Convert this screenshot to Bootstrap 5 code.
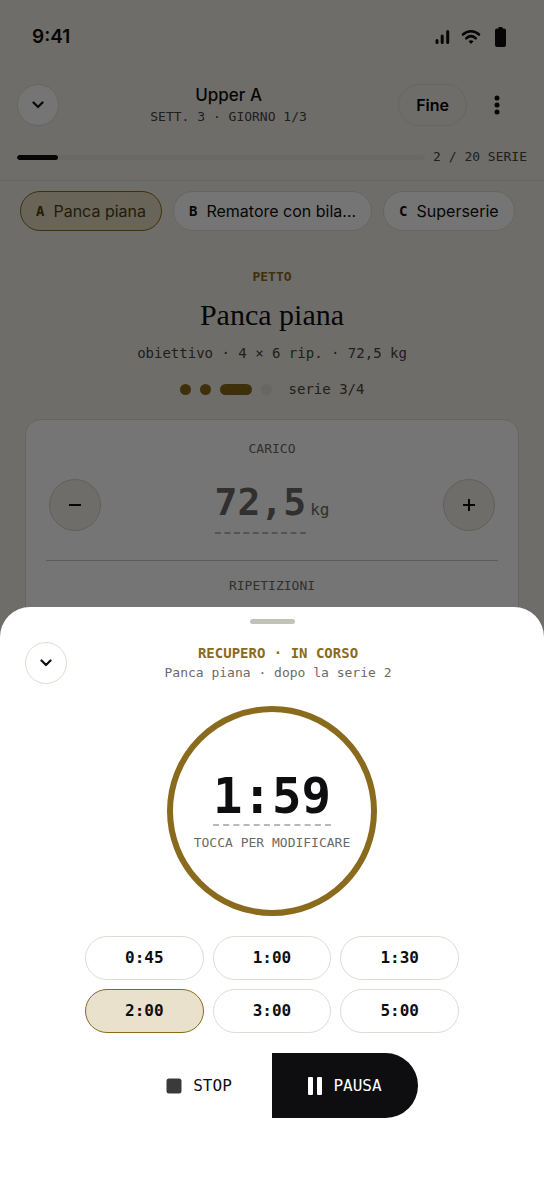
<!DOCTYPE html>
<html lang="it">
<head>
<meta charset="utf-8">
<meta name="viewport" content="width=device-width, initial-scale=1">
<title>Upper A – Recupero</title>
<link href="https://cdn.jsdelivr.net/npm/bootstrap@5.3.0/dist/css/bootstrap.min.css" rel="stylesheet">
<style>
  :root {
    --ink: #0e0e10;
    --soft-ink: #444441;
    --muted-ink: #6b6a66;
    --gold: #8a6a1c;
    --gold-soft: #e9e1cb;
    --paper: #f2eee8;
    --line: #dfdcd6;
    --mono: "DejaVu Sans Mono", "Liberation Mono", monospace;
  }
  body { font-family: Inter, Roboto, sans-serif; color: var(--ink); background: var(--paper); }
  .mono { font-family: var(--mono); }
  .t13 { font-size: 13px; line-height: 20px; }
  .t14 { font-size: 14px; line-height: 20px; }
  .t16 { font-size: 16px; line-height: 20px; }
  .ink-soft { color: var(--soft-ink); }
  .ink-muted { color: var(--muted-ink); }
  .gold { color: var(--gold); }

  .statusbar { height: 74px; padding: 0 38px 0 32px; }
  .clock { font-size: 19px; font-weight: 600; }
  .topbar { padding: 9px 17px 13px; border-bottom: 1px solid var(--line); }
  .round-btn { width: 42px; height: 42px; border: 1px solid var(--line); border-radius: 50%; background: #fff; color: var(--ink); padding: 0; flex: none; display: grid; place-items: center; }
  .end-btn { height: 42px; padding: 0 17px; border: 1px solid var(--line); border-radius: 21px; background: transparent; font-size: 16px; font-weight: 600; }
  .menu-btn { width: 42px; height: 42px; margin: 0 9px; border: 0; background: transparent; padding: 0; display: grid; place-items: center; }
  .session { font-size: 17px; font-weight: 500; line-height: 24px; }
  .track { height: 5px; background: #e8e4dc; border-radius: 3px; }
  .track .progress-bar { background: var(--ink); border-radius: 3px; }

  .chips { padding: 10px 20px 0; gap: 11px; }
  .chip { height: 40px; padding: 0 15px; border: 1px solid var(--line); border-radius: 20px; background: #fff; color: var(--ink); font-size: 16px; display: flex; align-items: center; gap: 9px; white-space: nowrap; }
  .chip b { font-family: var(--mono); font-size: 14px; }
  .chip.on { background: #e2dbbf; border-color: var(--gold); color: #4f3d12; }

  .muscle { margin-top: 36px; }
  .exercise { font-family: "Liberation Serif", serif; font-size: 30px; line-height: 44px; font-weight: 400; margin: 6px 0; }
  .sets { gap: 9px; }
  .dot { width: 11px; height: 11px; border-radius: 6px; background: var(--gold); }
  .dot.now { width: 32px; }
  .dot.todo { background: #e4e0d9; }

  .entry { margin: 20px 25px 0; padding: 19px 20px; background: #fff; border: 1px solid var(--line); border-radius: 16px; height: 420px; }
  .load-row { margin-top: 17px; padding: 0 3px; }
  .step { width: 52px; height: 52px; border: 1px solid #d4d0c9; border-radius: 50%; background: var(--paper); display: grid; place-items: center; padding: 0; }
  .load { font-size: 38px; line-height: 52px; font-weight: 700; color: #6b6a66; padding-bottom: 4px; }
  .dashed { border: 0; border-bottom: 2px dashed #b9b8b4; background: transparent; }
  .rule { border-top: 1px solid #c9c6c0; margin: 26px 0 15px; }

  .scrim { background: rgba(0, 0, 0, .54); }
  .sheet { background: #fff; border-radius: 30px 30px 0 0; padding: 12px 25px 64px; }
  .grip { width: 45px; height: 5px; border-radius: 3px; background: #c2c2b9; margin: 0 auto 18px; }
  .sheet-head { display: grid; grid-template-columns: 42px 1fr 30px; }
  .sheet-title { padding-top: 1px; }
  .dial { width: 210px; height: 210px; border: 6px solid var(--gold); border-radius: 50%; background: transparent; padding: 0; margin: 22px auto 20px; display: flex; flex-direction: column; align-items: center; justify-content: center; color: var(--ink); }
  .time { font-size: 49px; line-height: 54px; font-weight: 700; border-bottom: 2px dashed #b9b8b4; margin-bottom: 7px; }
  .presets { display: grid; grid-template-columns: repeat(3, 1fr); gap: 9px; max-width: 374px; margin: 0 auto 20px; }
  .preset { height: 44px; border: 1px solid var(--line); border-radius: 22px; background: #fff; color: var(--ink); font-weight: 700; padding: 0; }
  .preset.on { background: var(--gold-soft); border-color: var(--gold); }
  .actions { display: grid; grid-template-columns: 1fr 1fr; max-width: 292px; margin: 0 auto; }
  .act { height: 65px; border: 0; background: #fff; color: var(--ink); display: flex; align-items: center; justify-content: center; gap: 11px; padding: 0; }
  .act.main { background: var(--ink); color: #fff; border-radius: 0 33px 33px 0; }
</style>
</head>
<body>
<div class="vh-100 overflow-hidden">
  <div class="statusbar d-flex align-items-center justify-content-between">
    <span class="clock">9:41</span>
    <div class="d-flex align-items-center">
      <svg width="15" height="16" viewBox="0 0 15 16" stroke="#0e0e10" stroke-width="3" stroke-linecap="round"><path d="M2 11.500v2M7.200 7v6.500M12.700 2.500v11"/></svg>
      <svg class="ms-2 me-2" width="25" height="18" viewBox="-1 0 25 18" fill="none" stroke="#0e0e10" stroke-width="2.600" stroke-linecap="round"><path d="M4 6.500C8.500 2.200 15.500 2.200 20 6.500M7.300 10.300c2.900-2.600 6.500-2.600 9.400 0"/><path d="M9.500 13.300q2.500-2 5 0L12 16z" fill="#0e0e10" stroke="none"/></svg>
      <svg class="ms-1" width="11" height="20" viewBox="0 0 11 20" fill="#0e0e10"><path d="M3.500 0h4v1.500H9a2 2 0 0 1 2 2V18a2 2 0 0 1-2 2H2a2 2 0 0 1-2-2V3.500a2 2 0 0 1 2-2h1.500z"/></svg>
    </div>
  </div>

  <header class="topbar">
    <div class="d-flex align-items-center">
      <button class="round-btn" type="button" aria-label="Riduci"><svg width="12" height="8" viewBox="0 0 12 8" fill="none" stroke="currentColor" stroke-width="2.200" stroke-linecap="round" stroke-linejoin="round"><path d="M1.500 1.500 6 6l4.500-4.500"/></svg></button>
      <div class="flex-fill text-center">
        <div class="session">Upper A</div>
        <div class="mono t13 ink-soft">SETT. 3 · GIORNO 1/3</div>
      </div>
      <button class="end-btn" type="button">Fine</button>
      <button class="menu-btn" type="button" aria-label="Altro"><svg width="6" height="20" viewBox="0 0 6 20" fill="#0e0e10"><circle cx="3" cy="3" r="2.500"/><circle cx="3" cy="10" r="2.500"/><circle cx="3" cy="17" r="2.500"/></svg></button>
    </div>
    <div class="d-flex align-items-center mt-3 pt-1">
      <div class="progress track flex-fill me-2" role="progressbar" aria-label="Serie completate" aria-valuenow="10" aria-valuemin="0" aria-valuemax="100"><div class="progress-bar" style="width:10%"></div></div>
      <span class="mono t13 ink-soft">2 / 20 SERIE</span>
    </div>
  </header>

  <nav class="chips d-flex" aria-label="Esercizi">
    <button class="chip on" type="button"><b>A</b>Panca piana</button>
    <button class="chip" type="button"><b>B</b>Rematore con bila…</button>
    <button class="chip" type="button"><b>C</b>Superserie</button>
  </nav>

  <main>
    <section class="text-center">
      <div class="mono t13 gold fw-bold muscle">PETTO</div>
      <h1 class="exercise">Panca piana</h1>
      <div class="mono t14 ink-soft">obiettivo · 4 × 6 rip. · 72,5 kg</div>
      <div class="sets d-flex align-items-center justify-content-center mt-3">
        <span class="dot"></span><span class="dot"></span><span class="dot now"></span><span class="dot todo"></span>
        <span class="mono t14 ink-soft ms-2">serie 3/4</span>
      </div>
    </section>
    <section class="entry">
      <div class="mono t13 ink-muted text-center">CARICO</div>
      <div class="load-row d-flex align-items-center justify-content-between">
        <button class="step" type="button" aria-label="Meno"><svg width="14" height="14" viewBox="0 0 14 14" stroke="#0e0e10" stroke-width="2"><path d="M1 7h12"/></svg></button>
        <div class="d-flex align-items-baseline mono">
          <button class="dashed load px-0 pt-0" type="button">72,5</button><span class="t16 ink-muted ms-1">kg</span>
        </div>
        <button class="step" type="button" aria-label="Più"><svg width="14" height="14" viewBox="0 0 14 14" stroke="#0e0e10" stroke-width="2"><path d="M1 7h12M7 1v12"/></svg></button>
      </div>
      <div class="rule"></div>
      <div class="mono t13 ink-muted text-center">RIPETIZIONI</div>
    </section>
  </main>
</div>

<div class="scrim position-fixed top-0 bottom-0 start-0 end-0"></div>

<section class="sheet position-fixed bottom-0 start-0 end-0" role="dialog" aria-label="Recupero">
  <div class="grip"></div>
  <div class="sheet-head">
    <button class="round-btn" type="button" aria-label="Chiudi"><svg width="12" height="8" viewBox="0 0 12 8" fill="none" stroke="currentColor" stroke-width="2.200" stroke-linecap="round" stroke-linejoin="round"><path d="M1.500 1.500 6 6l4.500-4.500"/></svg></button>
    <div class="sheet-title text-center mono">
      <div class="t14 gold fw-bold">RECUPERO · IN CORSO</div>
      <div class="t13 ink-muted">Panca piana · dopo la serie 2</div>
    </div>
  </div>
  <button class="dial mono" type="button">
    <span class="time">1:59</span>
    <span class="t13 ink-muted">TOCCA PER MODIFICARE</span>
  </button>
  <div class="presets mono t16">
    <button class="preset" type="button">0:45</button>
    <button class="preset" type="button">1:00</button>
    <button class="preset" type="button">1:30</button>
    <button class="preset on" type="button" aria-pressed="true">2:00</button>
    <button class="preset" type="button">3:00</button>
    <button class="preset" type="button">5:00</button>
  </div>
  <div class="actions mono t16">
    <button class="act" type="button"><svg width="16" height="16" viewBox="0 0 16 16"><rect width="15" height="15" x=".5" y=".5" rx="2.500" fill="#3a3a3b"/></svg>STOP</button>
    <button class="act main" type="button"><svg width="14" height="18" viewBox="0 0 14 18" fill="#fff"><rect width="5" height="18" rx="1"/><rect x="9" width="5" height="18" rx="1"/></svg>PAUSA</button>
  </div>
</section>
<script src="https://cdn.jsdelivr.net/npm/bootstrap@5.3.0/dist/js/bootstrap.bundle.min.js"></script>
</body>
</html>
